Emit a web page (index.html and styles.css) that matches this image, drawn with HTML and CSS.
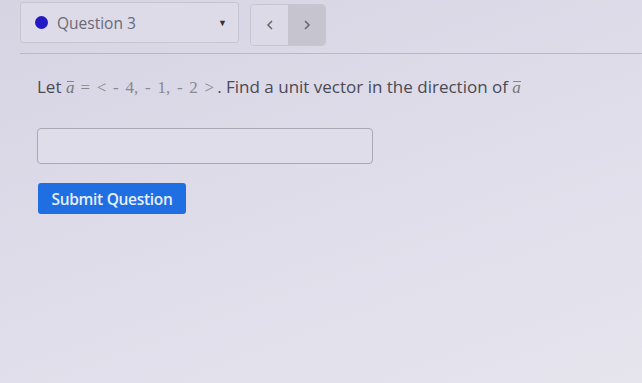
FILE: index.html
```html
<!DOCTYPE html>
<html lang="en">
<head>
    <meta charset="UTF-8">
    <title>Question 3</title>
    <link rel="stylesheet" href="styles.css">
</head>
<body>
    <div class="page">
        <div class="nav-bar">
            <div class="question-select">
                <span class="status-dot"></span>
                <span class="select-label">Question 3</span>
                <span class="select-caret">&#9660;</span>
            </div>
            <div class="pager">
                <button class="pager-btn">
                    <svg viewBox="0 0 10 14"><path d="M7 3 L3 7 L7 11" /></svg>
                </button>
                <button class="pager-btn next">
                    <svg viewBox="0 0 10 14"><path d="M3 3 L7 7 L3 11" /></svg>
                </button>
            </div>
        </div>

        <div class="question">
            <p class="prompt">
                Let <span class="vec">a</span><span class="math">= &lt; - 4, - 1, - 2 &gt;</span>. Find a unit vector in the direction of <span class="vec">a</span>
            </p>
            <input type="text" class="answer-input">
            <button class="submit-btn">Submit Question</button>
        </div>
    </div>
</body>
</html>
```

FILE: styles.css
```css
* {
    margin: 0;
    padding: 0;
    box-sizing: border-box;
}

body {
    font-family: "Open Sans", "Noto Sans", sans-serif;
    background: linear-gradient(160deg, #d6d4e3 0%, #dedce9 45%, #e6e5ee 100%);
    min-height: 100vh;
    color: #444;
}

.page {
    padding: 2px 0 0 20px;
}

.nav-bar {
    display: flex;
    align-items: flex-start;
    gap: 11px;
    padding-bottom: 7px;
    border-bottom: 1px solid #b9b8c6;
}

.question-select {
    width: 219px;
    height: 41px;
    display: flex;
    align-items: center;
    padding: 0 11px 0 14px;
    border: 1px solid #c6c5d2;
    border-radius: 3px;
    background: #dddbe8;
}

.status-dot {
    width: 13px;
    height: 13px;
    border-radius: 50%;
    background: #2218c4;
    margin-right: 9px;
}

.select-label {
    flex: 1;
    font-size: 15.5px;
    color: #6a6a76;
}

.select-caret {
    font-size: 9px;
    color: #333;
}

.pager {
    display: flex;
    margin-top: 2px;
    border: 1px solid #c6c5d2;
    border-radius: 4px;
    overflow: hidden;
}

.pager-btn {
    width: 37px;
    height: 40px;
    border: none;
    background: #dcdae6;
    display: flex;
    align-items: center;
    justify-content: center;
}

.pager-btn.next {
    background: #c5c4cf;
}

.pager-btn svg {
    width: 10px;
    height: 14px;
    fill: none;
    stroke: #666;
    stroke-width: 1.5;
}

.question {
    padding: 21px 0 0 17px;
}

.prompt {
    font-size: 17px;
    color: #4a4a55;
    margin-bottom: 30px;
}

.vec {
    font-family: "Liberation Serif", serif;
    font-style: italic;
    font-size: 17px;
    color: #777;
    position: relative;
}

.vec::before {
    content: '';
    position: absolute;
    left: 1px;
    right: 0;
    top: 3px;
    height: 1px;
    background: #888;
}

.math {
    font-family: "Liberation Serif", serif;
    font-size: 17px;
    color: #888;
    margin: 0 3px 0 6px;
    word-spacing: 2.5px;
}

.answer-input {
    display: block;
    width: 336px;
    height: 36px;
    border: 1px solid #a9a8b4;
    border-radius: 4px;
    background: #dfdde9;
    margin-bottom: 19px;
}

.submit-btn {
    display: block;
    width: 148px;
    height: 31px;
    margin-left: 1px;
    border: none;
    border-radius: 3px;
    background: #1f6fe3;
    color: #e8eefc;
    font-family: "Open Sans", "Noto Sans", sans-serif;
    font-size: 15.5px;
    font-weight: 600;
    letter-spacing: -0.3px;
}
```
